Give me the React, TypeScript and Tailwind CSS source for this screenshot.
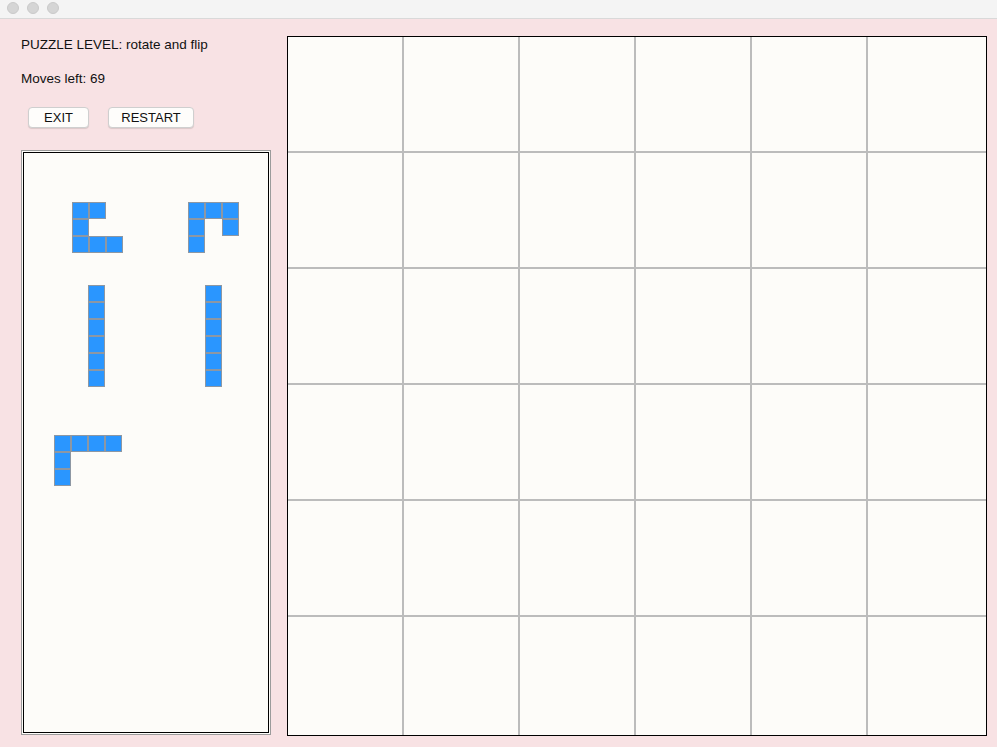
import React from 'react';

// pieces in the tray: shape rows, 'X' = filled cell
const PIECES = [
  { id: 'p1', x: 50, y: 50, shape: ['XX.', 'X..', 'XXX'] },
  { id: 'p2', x: 166, y: 50, shape: ['XXX', 'X.X', 'X..'] },
  { id: 'p3', x: 66, y: 133, shape: ['X', 'X', 'X', 'X', 'X', 'X'] },
  { id: 'p4', x: 183, y: 133, shape: ['X', 'X', 'X', 'X', 'X', 'X'] },
  { id: 'p5', x: 32, y: 283, shape: ['XXXX', 'X...', 'X...'] },
];

const Piece: React.FC<{ shape: string[]; x: number; y: number }> = ({ shape, x, y }) => (
  <div className="absolute flex flex-col" style={{ left: x, top: y }}>
    {shape.map((row, r) => (
      <div key={r} className="flex">
        {row.split('').map((c, i) =>
          c === 'X' ? (
            <div key={i} className="w-[17px] h-[17px] bg-[#2a96ff] border border-[#8d97a3]" />
          ) : (
            <div key={i} className="w-[17px] h-[17px]" />
          )
        )}
      </div>
    ))}
  </div>
);

export default function App() {
  return (
    <div className="w-[997px] h-[747px] flex flex-col bg-[#f8e2e4] overflow-hidden font-['Liberation_Sans',Arial,sans-serif] text-[13.5px] text-[#111]">
      {/* window title bar */}
      <div className="h-[19px] shrink-0 bg-[#f4f4f4] border-b border-[#d9d9d9] flex items-center gap-2 pl-[7px] pb-[2px]">
        <span className="w-3 h-3 rounded-full bg-[#d5d5d5] border border-[#cacaca]" />
        <span className="w-3 h-3 rounded-full bg-[#d5d5d5] border border-[#cacaca]" />
        <span className="w-3 h-3 rounded-full bg-[#d5d5d5] border border-[#cacaca]" />
      </div>

      <div className="flex items-start pt-[17px] pl-[21px] gap-4">
        {/* left column */}
        <div className="w-[250px] flex flex-col">
          <div className="pt-px leading-4 h-[17px]">PUZZLE LEVEL: rotate and flip</div>
          <div className="mt-[18px] leading-4 h-4">Moves left: 69</div>
          <div className="mt-[20px] flex gap-[19px] pl-[7px]">
            <button className="w-[61px] h-[21px] rounded-[4px] bg-[#fefdfb] border border-[#cfcfcf] shadow-[0_1px_1px_rgba(0,0,0,0.12)] text-[13px] leading-none">
              EXIT
            </button>
            <button className="w-[86px] h-[21px] rounded-[4px] bg-[#fefdfb] border border-[#cfcfcf] shadow-[0_1px_1px_rgba(0,0,0,0.12)] text-[13px] leading-none">
              RESTART
            </button>
          </div>
          <div className="mt-[22px] h-[585px] border border-[#9b9b9b] p-px bg-[#fdfcf9]">
            <div className="relative h-full border border-black bg-[#fdfcf9]">
              {PIECES.map((p) => (
                <Piece key={p.id} shape={p.shape} x={p.x - 2} y={p.y - 1} />
              ))}
            </div>
          </div>
        </div>

        {/* board */}
        <div className="w-[700px] h-[700px] border border-black bg-[#bcbcbc] grid grid-cols-[repeat(5,114px)_1fr] grid-rows-[repeat(5,114px)_1fr] gap-[2px]">
          {Array.from({ length: 36 }).map((_, i) => (
            <div key={i} className="bg-[#fdfcf9]" />
          ))}
        </div>
      </div>
    </div>
  );
}
